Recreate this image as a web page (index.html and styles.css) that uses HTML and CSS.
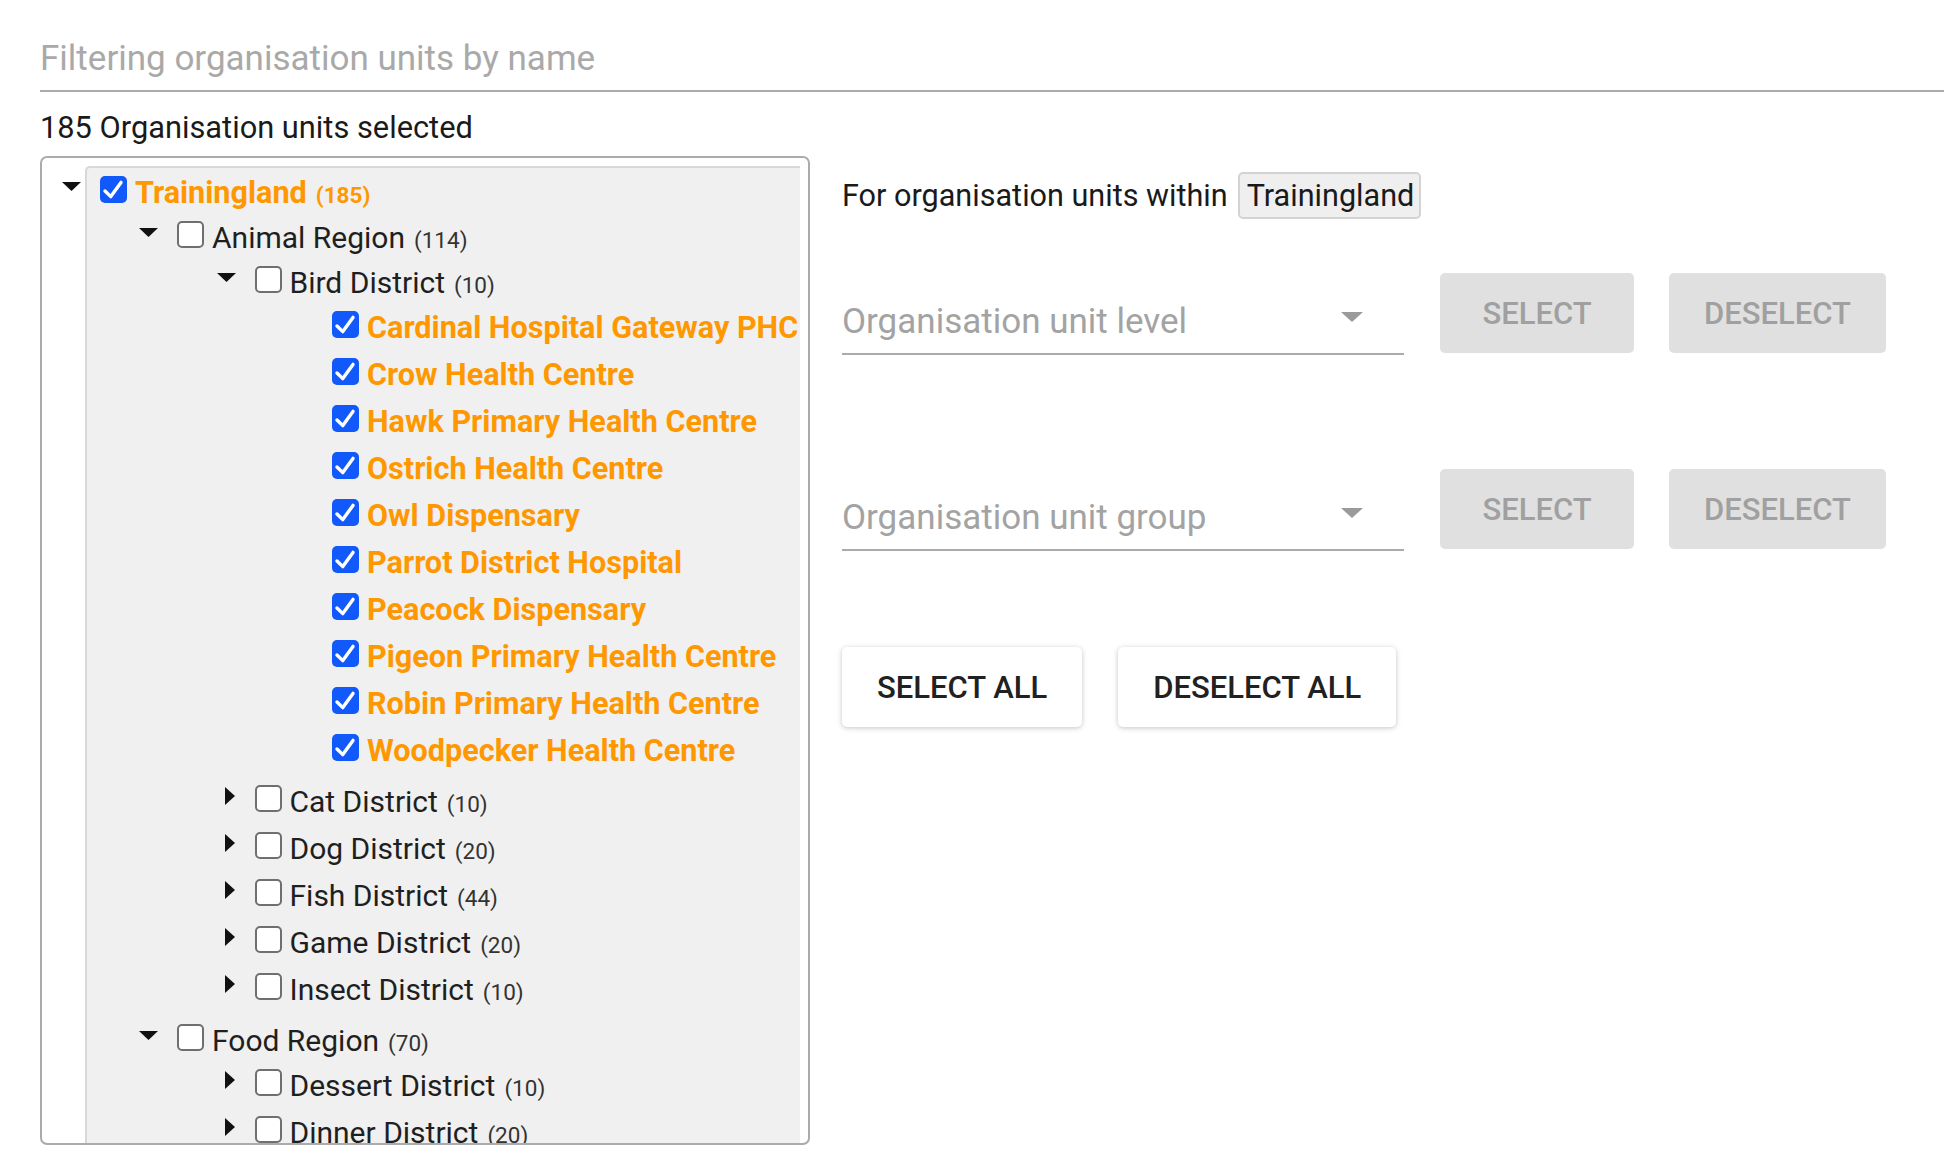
FILE: index.html
```html
<!DOCTYPE html>
<html lang="en">
<head>
<meta charset="utf-8">
<title>Organisation unit selection</title>
<link rel="stylesheet" href="styles.css">
</head>
<body>
<div class="page">
  <div class="filter">Filtering organisation units by name</div>
  <div class="count">185 Organisation units selected</div>

  <div class="main">
    <div class="tree-box">
      <div class="tree-inner">
        <div class="gutter">
          <svg class="arrow-down" width="19" height="9" viewBox="0 0 19 9"><polygon points="0,0 19,0 9.5,9"/></svg>
        </div>
        <div class="panel">
          <div class="row open root-row">
            <span class="cb checked"><svg width="27" height="27" viewBox="0 0 27 27"><polyline points="5,15 10.8,20.6 21,6.4"/></svg></span>
            <span class="label sel">Trainingland<span class="cnt">(185)</span></span>
          </div>
          <div class="children first">
            <div class="row open">
              <span class="toggle"><svg class="arrow-down" width="19" height="9" viewBox="0 0 19 9"><polygon points="0,0 19,0 9.5,9"/></svg></span>
              <span class="cb"></span>
              <span class="label">Animal Region<span class="cnt">(114)</span></span>
            </div>
            <div class="children">
              <div class="row open">
                <span class="toggle"><svg class="arrow-down" width="19" height="9" viewBox="0 0 19 9"><polygon points="0,0 19,0 9.5,9"/></svg></span>
                <span class="cb"></span>
                <span class="label">Bird District<span class="cnt">(10)</span></span>
              </div>
              <div class="children">
                <div class="row"><span class="toggle"></span><span class="cb checked"><svg width="27" height="27" viewBox="0 0 27 27"><polyline points="5,15 10.8,20.6 21,6.4"/></svg></span><span class="label sel">Cardinal Hospital Gateway PHC</span></div>
                <div class="row"><span class="toggle"></span><span class="cb checked"><svg width="27" height="27" viewBox="0 0 27 27"><polyline points="5,15 10.8,20.6 21,6.4"/></svg></span><span class="label sel">Crow Health Centre</span></div>
                <div class="row"><span class="toggle"></span><span class="cb checked"><svg width="27" height="27" viewBox="0 0 27 27"><polyline points="5,15 10.8,20.6 21,6.4"/></svg></span><span class="label sel">Hawk Primary Health Centre</span></div>
                <div class="row"><span class="toggle"></span><span class="cb checked"><svg width="27" height="27" viewBox="0 0 27 27"><polyline points="5,15 10.8,20.6 21,6.4"/></svg></span><span class="label sel">Ostrich Health Centre</span></div>
                <div class="row"><span class="toggle"></span><span class="cb checked"><svg width="27" height="27" viewBox="0 0 27 27"><polyline points="5,15 10.8,20.6 21,6.4"/></svg></span><span class="label sel">Owl Dispensary</span></div>
                <div class="row"><span class="toggle"></span><span class="cb checked"><svg width="27" height="27" viewBox="0 0 27 27"><polyline points="5,15 10.8,20.6 21,6.4"/></svg></span><span class="label sel">Parrot District Hospital</span></div>
                <div class="row"><span class="toggle"></span><span class="cb checked"><svg width="27" height="27" viewBox="0 0 27 27"><polyline points="5,15 10.8,20.6 21,6.4"/></svg></span><span class="label sel">Peacock Dispensary</span></div>
                <div class="row"><span class="toggle"></span><span class="cb checked"><svg width="27" height="27" viewBox="0 0 27 27"><polyline points="5,15 10.8,20.6 21,6.4"/></svg></span><span class="label sel">Pigeon Primary Health Centre</span></div>
                <div class="row"><span class="toggle"></span><span class="cb checked"><svg width="27" height="27" viewBox="0 0 27 27"><polyline points="5,15 10.8,20.6 21,6.4"/></svg></span><span class="label sel">Robin Primary Health Centre</span></div>
                <div class="row"><span class="toggle"></span><span class="cb checked"><svg width="27" height="27" viewBox="0 0 27 27"><polyline points="5,15 10.8,20.6 21,6.4"/></svg></span><span class="label sel">Woodpecker Health Centre</span></div>
              </div>
              <div class="row"><span class="toggle"><svg class="arrow-right" width="10" height="18" viewBox="0 0 10 18"><polygon points="0,0 10,9 0,18"/></svg></span><span class="cb"></span><span class="label">Cat District<span class="cnt">(10)</span></span></div>
              <div class="row"><span class="toggle"><svg class="arrow-right" width="10" height="18" viewBox="0 0 10 18"><polygon points="0,0 10,9 0,18"/></svg></span><span class="cb"></span><span class="label">Dog District<span class="cnt">(20)</span></span></div>
              <div class="row"><span class="toggle"><svg class="arrow-right" width="10" height="18" viewBox="0 0 10 18"><polygon points="0,0 10,9 0,18"/></svg></span><span class="cb"></span><span class="label">Fish District<span class="cnt">(44)</span></span></div>
              <div class="row"><span class="toggle"><svg class="arrow-right" width="10" height="18" viewBox="0 0 10 18"><polygon points="0,0 10,9 0,18"/></svg></span><span class="cb"></span><span class="label">Game District<span class="cnt">(20)</span></span></div>
              <div class="row"><span class="toggle"><svg class="arrow-right" width="10" height="18" viewBox="0 0 10 18"><polygon points="0,0 10,9 0,18"/></svg></span><span class="cb"></span><span class="label">Insect District<span class="cnt">(10)</span></span></div>
            </div>
            <div class="row open">
              <span class="toggle"><svg class="arrow-down" width="19" height="9" viewBox="0 0 19 9"><polygon points="0,0 19,0 9.5,9"/></svg></span>
              <span class="cb"></span>
              <span class="label">Food Region<span class="cnt">(70)</span></span>
            </div>
            <div class="children">
              <div class="row"><span class="toggle"><svg class="arrow-right" width="10" height="18" viewBox="0 0 10 18"><polygon points="0,0 10,9 0,18"/></svg></span><span class="cb"></span><span class="label">Dessert District<span class="cnt">(10)</span></span></div>
              <div class="row"><span class="toggle"><svg class="arrow-right" width="10" height="18" viewBox="0 0 10 18"><polygon points="0,0 10,9 0,18"/></svg></span><span class="cb"></span><span class="label">Dinner District<span class="cnt">(20)</span></span></div>
            </div>
          </div>
        </div>
      </div>
    </div>

    <div class="side">
      <div class="within">
        <span>For organisation units within</span>
        <span class="chip">Trainingland</span>
      </div>

      <div class="pick-row first-pick">
        <div class="select">
          <span class="select-placeholder">Organisation unit level</span>
          <svg class="select-arrow" width="22" height="10" viewBox="0 0 22 10"><polygon points="0,0 22,0 11,10"/></svg>
        </div>
        <button class="btn-disabled btn-select">SELECT</button>
        <button class="btn-disabled">DESELECT</button>
      </div>

      <div class="pick-row second-pick">
        <div class="select">
          <span class="select-placeholder">Organisation unit group</span>
          <svg class="select-arrow" width="22" height="10" viewBox="0 0 22 10"><polygon points="0,0 22,0 11,10"/></svg>
        </div>
        <button class="btn-disabled btn-select">SELECT</button>
        <button class="btn-disabled">DESELECT</button>
      </div>

      <div class="all-row">
        <button class="btn-raised">SELECT ALL</button>
        <button class="btn-raised">DESELECT ALL</button>
      </div>
    </div>
  </div>
</div>
</body>
</html>
```

FILE: styles.css
```css
html, body {
  margin: 0;
  padding: 0;
  background: #ffffff;
}

body {
  font-family: Roboto, "Liberation Sans", sans-serif;
  color: #1f1f1f;
  overflow: hidden;
}

.page {
  padding-left: 40px;
}

.filter {
  padding-top: 38px;
  padding-bottom: 10px;
  border-bottom: 2px solid #ababab;
  font-size: 35px;
  line-height: 42px;
  color: #a9a9a9;
}

.count {
  margin: 18px 0 11px;
  font-size: 30.8px;
  line-height: 35px;
  color: #1a1a1a;
}

.main {
  display: flex;
  align-items: flex-start;
}

/* ---------- tree ---------- */
.tree-box {
  width: 770px;
  height: 989px;
  box-sizing: border-box;
  border: 2px solid #ababab;
  border-radius: 7px;
  overflow: hidden;
  flex: none;
}

.tree-inner {
  display: flex;
  height: 100%;
  box-sizing: border-box;
  padding-top: 8px;
}

.gutter {
  width: 43px;
  flex: none;
}

.gutter .arrow-down {
  display: block;
  margin: 16px 0 0 20px;
}

.panel {
  flex: 1;
  margin-right: 8px;
  background: #f0f0f0;
  border-top: 2px solid #d8d8d8;
  border-left: 2px solid #d8d8d8;
  border-top-left-radius: 5px;
  padding: 1px 0 0 13px;
  overflow: hidden;
}

.row {
  display: flex;
  align-items: flex-start;
  height: 47px;
  white-space: nowrap;
}

.row.open {
  height: 45px;
}

.toggle {
  width: 38px;
  flex: none;
}

.toggle .arrow-down {
  display: block;
  margin-top: 14px;
}

.toggle .arrow-right {
  display: block;
  margin: 9px 0 0 8px;
}

svg polygon {
  fill: #111111;
}

.cb {
  width: 27px;
  height: 27px;
  box-sizing: border-box;
  flex: none;
  margin-top: 7px;
  margin-right: 8px;
  border: 2px solid #6f6f6f;
  border-radius: 5px;
  background: #ffffff;
}

.cb.checked {
  border: none;
  background: #1259fb;
}

.cb svg {
  display: block;
}

.cb polyline {
  fill: none;
  stroke: #ffffff;
  stroke-width: 3.4;
  stroke-linecap: round;
  stroke-linejoin: round;
}

.label {
  font-size: 30px;
  line-height: 35px;
  margin-top: 6px;
  color: #1f1f1f;
}

.label.sel {
  color: #ff9800;
  font-weight: 700;
  font-size: 30.6px;
}

.cnt {
  font-size: 22.5px;
  margin-left: 9px;
  color: #333333;
  font-weight: 400;
}

.label.sel .cnt {
  color: #ff9800;
  font-weight: 700;
}

.children {
  padding-left: 77.5px;
  margin-bottom: 4px;
}

.children.first {
  padding-left: 39px;
}

/* ---------- side ---------- */
.side {
  margin-left: 32px;
  padding-top: 16px;
  flex: 1;
}

.within {
  display: flex;
  align-items: center;
  height: 47px;
  font-size: 30.6px;
  line-height: 35px;
  color: #1a1a1a;
}

.chip {
  margin-left: 10px;
  height: 47px;
  box-sizing: border-box;
  border: 2px solid #d3d3d3;
  border-radius: 5px;
  background: #efefef;
  padding: 0 5px 0 7px;
  line-height: 43px;
}

.pick-row {
  display: flex;
  align-items: flex-end;
}

.first-pick {
  margin-top: 54px;
}

.second-pick {
  margin-top: 114px;
}

.select {
  width: 562px;
  display: flex;
  justify-content: space-between;
  align-items: flex-start;
  border-bottom: 2px solid #ababab;
  padding-bottom: 11px;
  line-height: 40px;
}

.select-placeholder {
  font-size: 35px;
  color: #a3a3a3;
}

.select-arrow {
  margin: 10px 41px 0 0;
}

.select-arrow polygon {
  fill: #9a9a9a;
}

button {
  font-family: Roboto, "Liberation Sans", sans-serif;
  font-weight: 500;
  font-size: 31px;
  height: 80px;
  border: none;
  border-radius: 5px;
  padding: 0 35px;
  cursor: pointer;
}

.btn-disabled {
  background: #e0e0e0;
  color: #a0a0a0;
  min-width: 194px;
  margin-bottom: 2px;
  margin-left: 35px;
}

.btn-disabled.btn-select {
  margin-left: 36px;
}

.all-row {
  display: flex;
  gap: 36px;
  margin-top: 96px;
}

.btn-raised {
  background: #ffffff;
  color: #212121;
  box-shadow: 0 1px 6px rgba(0, 0, 0, 0.12), 0 1px 4px rgba(0, 0, 0, 0.12);
}
```
